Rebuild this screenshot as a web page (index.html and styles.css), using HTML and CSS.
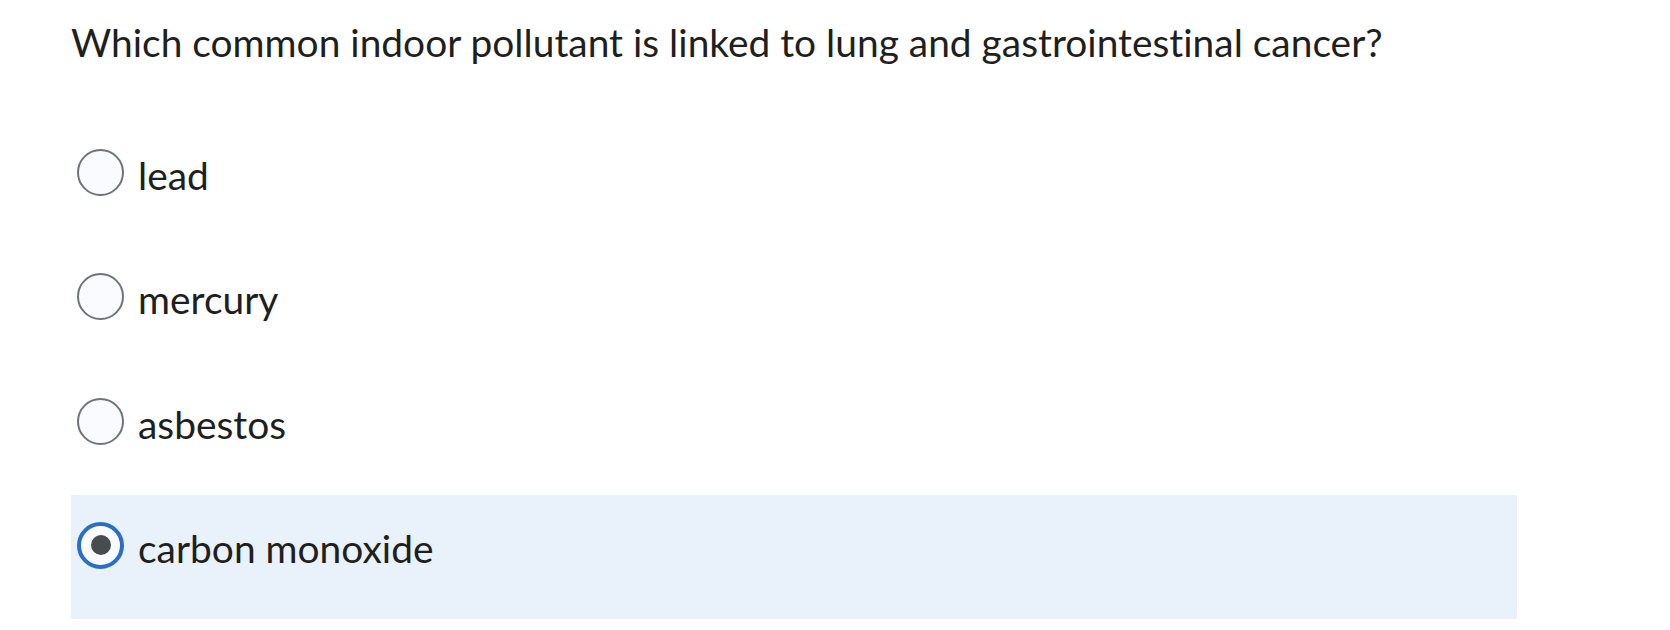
FILE: index.html
```html
<!DOCTYPE html>
<html lang="en">
<head>
<meta charset="utf-8">
<title>Question</title>
<link rel="stylesheet" href="styles.css">
</head>
<body>
<div class="quiz">
  <p class="question">Which common indoor pollutant is linked to lung and gastrointestinal cancer?</p>
  <div class="options">
    <label class="option">
      <span class="radio"></span>
      <span class="text">lead</span>
    </label>
    <label class="option">
      <span class="radio"></span>
      <span class="text">mercury</span>
    </label>
    <label class="option">
      <span class="radio"></span>
      <span class="text">asbestos</span>
    </label>
    <label class="option selected">
      <span class="radio"><span class="dot"></span></span>
      <span class="text">carbon monoxide</span>
    </label>
  </div>
</div>
</body>
</html>
```

FILE: styles.css
```css
* { box-sizing: border-box; }
html, body { margin: 0; padding: 0; background: #ffffff; }
body {
  font-family: Lato, "Open Sans", "Liberation Sans", sans-serif;
  color: #1e1f20;
  font-variant-ligatures: none;
}
.quiz {
  width: 1446px;
  margin-left: 71px;
  padding-top: 19px;
}
.question {
  margin: 0;
  font-size: 38.9px;
  line-height: 46px;
  height: 103px;
}
.options {
  display: flex;
  flex-direction: column;
}
.option {
  display: flex;
  align-items: flex-start;
  gap: 14px;
  height: 124.3px;
  padding: 27px 0 0 6px;
}
.option.selected { background: #e9f1fb; }
.radio {
  flex: none;
  width: 47px;
  height: 47px;
  border-radius: 50%;
  border: 2px solid #6e7477;
  background: #f9fbff;
  display: flex;
  align-items: center;
  justify-content: center;
}
.selected .radio {
  border: 4px solid #2a6fc4;
}
.dot {
  width: 20px;
  height: 20px;
  border-radius: 50%;
  background: #494c4e;
}
.text {
  font-size: 38.9px;
  line-height: 47px;
  padding-top: 3px;
}
```
